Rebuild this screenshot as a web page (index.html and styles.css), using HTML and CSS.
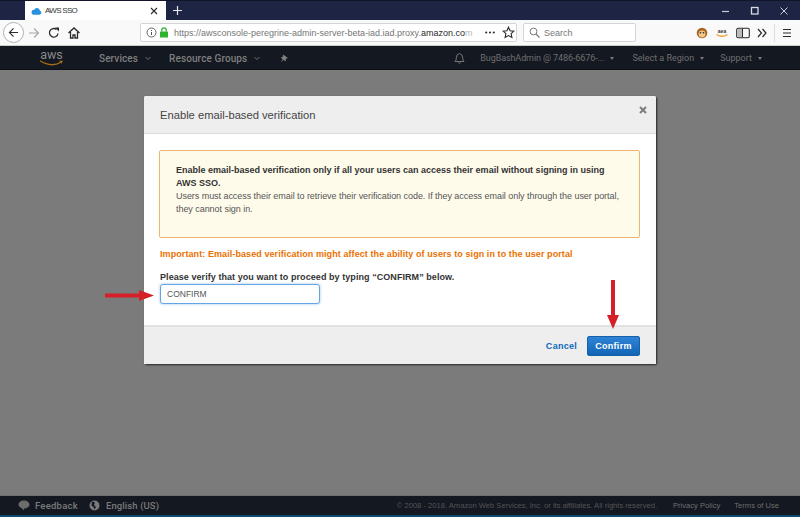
FILE: index.html
```html
<!DOCTYPE html>
<html lang="en">
<head>
<meta charset="utf-8">
<title>AWS SSO</title>
<link rel="stylesheet" href="styles.css">
</head>
<body>
<div class="window">
  <div class="tabbar">
    <div class="tab">
      <svg class="tab-icon" width="11" height="8" viewBox="0 0 16 12"><path d="M4 11.500h8.500a3 3 0 0 0 .6-5.900A4.500 4.500 0 0 0 4.600 4 3.700 3.700 0 0 0 4 11.500z" fill="#2b8fe0"/></svg>
      <span class="tab-title">AWS SSO</span>
      <svg class="tab-close" width="8" height="8" viewBox="0 0 8 8"><path d="M1 1l6 6M7 1L1 7" stroke="#2a2a2a" stroke-width="1.100"/></svg>
    </div>
    <svg class="new-tab" width="9" height="9" viewBox="0 0 9 9"><path d="M4.500 0v9M0 4.500h9" stroke="#e8e9ef" stroke-width="1.200"/></svg>
    <div class="win-buttons">
      <svg width="10" height="10" viewBox="0 0 10 10"><path d="M1 5.500h7" stroke="#c9cbd6" stroke-width="1.200"/></svg>
      <svg width="10" height="10" viewBox="0 0 10 10"><rect x="1.500" y="1.500" width="6.500" height="6.500" fill="none" stroke="#d8dae2" stroke-width="1.300"/></svg>
      <svg width="10" height="10" viewBox="0 0 10 10"><path d="M1.500 1.500l7 7M8.500 1.500l-7 7" stroke="#c9cbd6" stroke-width="1"/></svg>
    </div>
  </div>

  <div class="toolbar">
    <div class="back">
      <svg width="11" height="11" viewBox="0 0 12 12"><path d="M11 6H1.500M6 1.500L1.500 6 6 10.500" fill="none" stroke="#2a2a2a" stroke-width="1.200"/></svg>
    </div>
    <svg class="tool-forward" width="12" height="12" viewBox="0 0 12 12"><path d="M1 6h9.500M6 1.500L10.500 6 6 10.500" fill="none" stroke="#a5a5a5" stroke-width="1.100"/></svg>
    <svg class="tool-reload" width="12" height="12" viewBox="0 0 12 12"><path d="M10 6.500A4.300 4.300 0 1 1 8.500 2.500" fill="none" stroke="#2a2a2a" stroke-width="1.300"/><path d="M7 0.500h4v4z" fill="#2a2a2a"/></svg>
    <svg class="tool-home" width="12" height="12" viewBox="0 0 12 12"><path d="M0.500 6L6 1l5.500 5M2.500 5v6h2.500V8h2v3h2.500V5" fill="none" stroke="#2a2a2a" stroke-width="1.300"/></svg>
    <div class="urlbar">
      <svg class="info" width="11" height="11" viewBox="0 0 11 11"><circle cx="5.500" cy="5.500" r="4.500" fill="none" stroke="#555" stroke-width="0.900"/><path d="M5.500 5v3M5.500 3v1" stroke="#555"/></svg>
      <svg class="lock" width="10" height="11" viewBox="0 0 10 11"><rect x="1" y="4.500" width="8" height="6" rx="0.500" fill="#2fb32f"/><path d="M2.800 4.500V3a2.200 2.200 0 0 1 4.400 0v1.500" fill="none" stroke="#2fb32f" stroke-width="1.300"/></svg>
      <span class="url"><span class="url-dim">https://awsconsole-peregrine-admin-server-beta-iad.iad.proxy.</span>amazon.co<span class="url-fade">m</span></span>
      <svg class="dots" width="10" height="3" viewBox="0 0 10 3"><circle cx="1.200" cy="1.500" r="1.100" fill="#333"/><circle cx="5" cy="1.500" r="1.100" fill="#333"/><circle cx="8.800" cy="1.500" r="1.100" fill="#333"/></svg>
      <svg class="star" width="13" height="13" viewBox="0 0 13 13"><path d="M6.500 1.200l1.600 3.500 3.800.4-2.800 2.600.8 3.800-3.400-1.900-3.400 1.900.8-3.800L1.100 5.100l3.800-.4z" fill="none" stroke="#2a2a2a" stroke-width="1.100"/></svg>
    </div>
    <div class="searchbar">
      <svg width="11" height="11" viewBox="0 0 11 11"><circle cx="4.500" cy="4.500" r="3.400" fill="none" stroke="#777" stroke-width="1"/><path d="M7 7l3.500 3.500" stroke="#777" stroke-width="1.100"/></svg>
      <span>Search</span>
    </div>
    <div class="tool-right">
      <svg width="12" height="12" viewBox="0 0 12 12"><circle cx="6" cy="6" r="5.300" fill="#a8651f"/><circle cx="6" cy="7" r="3.400" fill="#f0c88a"/><circle cx="4.500" cy="5.700" r="0.800" fill="#222"/><circle cx="7.500" cy="5.700" r="0.800" fill="#222"/></svg>
      <svg width="14" height="12" viewBox="0 0 14 12"><text class="amz" x="7" y="5.500" text-anchor="middle">aea</text><path d="M1.500 7.500q5.500 3.500 11 0" fill="none" stroke="#f0a030" stroke-width="1.300"/></svg>
      <svg width="14" height="12" viewBox="0 0 14 12"><rect x="0.700" y="1.200" width="12.600" height="9.600" rx="1.500" fill="none" stroke="#2a2a2a" stroke-width="1.100"/><rect x="1.500" y="2" width="4.500" height="8" fill="#bbb"/><path d="M6.500 1.500v9" stroke="#2a2a2a"/></svg>
      <svg width="10" height="10" viewBox="0 0 10 10"><path d="M1 1l3.500 4L1 9M5.500 1L9 5 5.500 9" fill="none" stroke="#2a2a2a" stroke-width="1.200"/></svg>
      <span class="sep"></span>
      <svg width="10" height="10" viewBox="0 0 10 10"><path d="M1 1.500h8M1 5h8M1 8.500h8" stroke="#2a2a2a" stroke-width="1.200"/></svg>
    </div>
  </div>

  <header class="topnav">
    <div class="aws-logo">
      <span class="aws-text">aws</span>
      <svg width="26" height="6" viewBox="0 0 26 6"><path d="M1 0.800q11 7 21 1.500" fill="none" stroke="#a86a18" stroke-width="1.300"/><path d="M20 0.800h4l-1.500 3z" fill="#a86a18"/></svg>
    </div>
    <a class="nav-item services">Services<svg class="chev" width="6" height="5" viewBox="0 0 7 5"><path d="M0.700 0.800L3.500 3.700 6.300 0.800" fill="none" stroke="#7f7f7f" stroke-width="1"/></svg></a>
    <a class="nav-item groups">Resource Groups<svg class="chev" width="6" height="5" viewBox="0 0 7 5"><path d="M0.700 0.800L3.500 3.700 6.300 0.800" fill="none" stroke="#7f7f7f" stroke-width="1"/></svg></a>
    <svg class="pin" width="9" height="9" viewBox="0 0 9 9"><path d="M3 0.500l5 3.500-2 .8-.3 2.700L3.500 5.800 1 8.500l1.500-3.500L0.800 3.200 2.800 2.800z" fill="#7f7f7f"/></svg>
    <svg class="bell" width="11" height="12" viewBox="0 0 11 12"><path d="M1 9.500q1.300-1 1.300-3.500 0-4 3.200-4.500 3.200.5 3.200 4.500 0 2.500 1.300 3.500zM4.300 10.500a1.300 1.300 0 0 0 2.400 0" fill="none" stroke="#7f7f7f" stroke-width="0.900"/></svg>
    <a class="nav-small user">BugBashAdmin @ 7486-6676-...<i class="caret"></i></a>
    <a class="nav-small region">Select a Region<i class="caret"></i></a>
    <a class="nav-small support">Support<i class="caret"></i></a>
  </header>

  <main class="page">
    <section class="modal">
      <div class="modal-head">
        <h1>Enable email-based verification</h1>
        <svg class="modal-close" width="8" height="8" viewBox="0 0 8 8"><path d="M1 1l6 6M7 1L1 7" stroke="#7d7d7d" stroke-width="2"/></svg>
      </div>
      <div class="modal-body">
        <div class="alert">
          <p class="alert-strong">Enable email-based verification only if all your users can access their email without signing in using AWS SSO.</p>
          <p class="alert-text">Users must access their email to retrieve their verification code. If they access email only through the user portal, they cannot sign in.</p>
        </div>
        <p class="important">Important: Email-based verification might affect the ability of users to sign in to the user portal</p>
        <label class="verify-label" for="confirm-input">Please verify that you want to proceed by typing “CONFIRM” below.</label>
        <input class="verify-input" id="confirm-input" type="text" value="CONFIRM">
      </div>
      <div class="modal-foot">
        <a class="cancel">Cancel</a>
        <button class="confirm" type="button">Confirm</button>
      </div>
    </section>
    <svg class="arrow arrow-input" width="49" height="11" viewBox="0 0 49 11"><path d="M0 3.500h34V0l15 5.500-15 5.500V7.500H0z" fill="#d5202a"/></svg>
    <svg class="arrow arrow-button" width="12" height="49" viewBox="0 0 12 49"><path d="M4 0h4v35h4L6 49 0 35h4z" fill="#d5202a"/></svg>
  </main>

  <footer class="footer">
    <svg class="foot-icon" width="12" height="11" viewBox="0 0 12 11"><path d="M6 0.500c3 0 5.500 1.800 5.500 4s-2.500 4-5.500 4l-.5 2L3.500 8C1.800 7.400.500 6.100.500 4.500c0-2.200 2.500-4 5.500-4z" fill="#6c6c6c"/></svg>
    <a class="foot-strong feedback">Feedback</a>
    <svg class="foot-icon globe" width="11" height="11" viewBox="0 0 11 11"><circle cx="5.500" cy="5.500" r="5" fill="#7a7a7a"/><path d="M3 1.500l3 1-1 2.500 2 2-1.500 2.500-1-2.500-2-1.500z" fill="#151a21"/></svg>
    <a class="foot-strong lang">English (US)</a>
    <span class="copyright">© 2008 - 2018, Amazon Web Services, Inc. or its affiliates. All rights reserved.</span>
    <a class="foot-link">Privacy Policy</a>
    <a class="foot-link">Terms of Use</a>
  </footer>
</div>
</body>
</html>
```

FILE: styles.css
```css
* { box-sizing: border-box; }
html, body { margin: 0; padding: 0; height: 100%; overflow: hidden; }
body { font-family: "Liberation Sans", Arial, sans-serif; background: #1c2340; }
a { text-decoration: none; }
p { margin: 0; }

.window { width: 800px; height: 517px; display: flex; flex-direction: column; }

/* browser chrome */
.tabbar { height: 20px; flex: none; display: flex; align-items: center; background: #1e2444; border-top: 1px solid #12152a; }
.tab { width: 141px; height: 19px; margin-left: 25px; background: #fff; display: flex; align-items: center; padding: 0 8px 0 6px; }
.tab-title { font-size: 8px; letter-spacing: -.7px; color: #333; margin-left: 3px; flex: 1; }
.new-tab { margin-left: 7px; }
.win-buttons { margin-left: auto; display: flex; gap: 19px; padding-right: 11px; }

.toolbar { height: 26px; flex: none; background: #f9f9fa; display: flex; align-items: center; border-bottom: 1px solid #ccc; padding: 0 0 0 3px; }
.back { width: 21px; height: 21px; border-radius: 50%; border: 1px solid #b1b1b3; background: #fff; display: flex; align-items: center; justify-content: center; }
.tool-forward { margin-left: 4px; }
.tool-reload { margin-left: 8px; }
.tool-home { margin-left: 8px; }
.urlbar { width: 377px; height: 19px; margin-left: 60px; border: 1px solid #d5d5d6; border-radius: 2px; background: #fff; display: flex; align-items: center; padding: 0 1px 0 5px; }
.lock { margin-left: 2px; }
.url { font-size: 9px; white-space: nowrap; margin-left: 5px; color: #2b2b2b; flex: none; }
.url-dim { color: #767676; }
.url-fade { color: #b5b5b5; }
.dots { margin-left: auto; }
.star { margin-left: 7px; }
.searchbar { width: 113px; height: 19px; margin-left: 6px; border: 1px solid #d5d5d6; border-radius: 2px; background: #fff; display: flex; align-items: center; gap: 4px; padding-left: 5px; font-size: 9px; color: #777; }
.tool-right { margin-left: auto; display: flex; align-items: center; gap: 7px; padding-right: 8px; }
.sep { width: 1px; height: 18px; background: #ddd; }
.amz { font-size: 5px; font-weight: 700; fill: #333; font-family: "Liberation Sans", sans-serif; }

/* AWS nav (dimmed) */
.topnav { height: 24px; flex: none; background: #131821; display: flex; align-items: center; font-family: Roboto, "Liberation Sans", sans-serif; border-bottom: 1px solid #0c0f15; padding-top: 1px; }
.aws-logo { margin-left: 38px; width: 27px; display: flex; flex-direction: column; align-items: center; line-height: 1; height: 20px; margin-top: -1px; }
.aws-text { font-size: 12.500px; color: #8a8a8a; line-height: 13px; }
.aws-logo svg { margin-top: -1px; }
.nav-item { font-size: 10px; font-weight: 500; color: #7f7f7f; display: flex; align-items: center; letter-spacing: .01em; }
.nav-item .chev { margin-left: 7px; }
.services { margin-left: 34px; }
.groups { margin-left: 18px; }
.pin { margin-left: 20px; }
.bell { margin-left: 165px; }
.nav-small { font-size: 9px; color: #6f6f6f; display: flex; align-items: center; white-space: nowrap; }
.caret { display: inline-block; width: 0; height: 0; border: 2.500px solid transparent; border-top: 3px solid #7a7a7a; border-bottom: 0; margin-left: 6px; }
.user { margin-left: 15px; letter-spacing: -.1px; }
.region { margin-left: 18px; }
.support { margin-left: 16px; }

/* page */
.page { height: 426px; flex: none; background: #7b7b7b; position: relative; padding: 26px 0 0 144px; border-bottom: 1px solid #6f6f6f; }
.modal { width: 512px; height: 268px; background: #fff; border-radius: 2px; box-shadow: 1px 1px 2px rgba(0,0,0,.7); display: flex; flex-direction: column; }
.modal-head { height: 38px; flex: none; background: #eee; border-bottom: 1px solid #ddd; border-radius: 2px 2px 0 0; position: relative; display: flex; align-items: center; padding-left: 16px; }
.modal-head h1 { margin: 0; font-size: 11.200px; font-weight: 400; color: #444; }
.modal-close { position: absolute; right: 9px; top: 10px; }
.modal-body { flex: 1; padding: 16px 16px 0 15px; }
.alert { width: 481px; height: 88px; background: #fffbeb; border: 1px solid #f0b56c; border-radius: 2px; padding: 13px 12px 0 16px; font-size: 9px; line-height: 13px; color: #555; }
.alert-strong { font-weight: 700; color: #333; }
.alert-text { letter-spacing: -.05px; }
.important { margin: 11px 0 0 1px; font-size: 9px; line-height: 11px; font-weight: 700; color: #eb7000; letter-spacing: .009em; }
.verify-label { display: block; margin: 12px 0 0 1px; font-size: 9px; line-height: 11px; font-weight: 700; color: #333; letter-spacing: .007em; }
.verify-input { display: block; width: 160px; height: 20px; margin: 1px 0 0 1px; padding: 0 6px; border: 1px solid #64a4e4; border-radius: 3px; box-shadow: 0 0 3px rgba(0,115,187,.4); font: 8.500px "Liberation Sans", sans-serif; color: #555; background: #fff; outline: none; }
.modal-foot { height: 39px; flex: none; background: #eee; border-top: 2px solid #e2e2e2; display: flex; align-items: center; justify-content: flex-end; padding: 0 16px 0 0; }
.cancel { font-size: 9px; font-weight: 700; color: #0d68b8; letter-spacing: .03em; margin-right: 10px; }
.confirm { width: 53px; height: 20px; border: 1px solid #1561a8; border-radius: 2px; background: linear-gradient(#2f83d6, #1265b5); color: #fff; font: 700 9px "Liberation Sans", sans-serif; letter-spacing: .03em; padding: 0; }
.arrow { position: absolute; }
.arrow-input { left: 105px; top: 220px; }
.arrow-button { left: 607px; top: 210px; }

/* footer */
.footer { flex: 1; background: #131821; display: flex; align-items: center; border-bottom: 2px solid #0c4a70; font-family: Roboto, "Liberation Sans", sans-serif; padding-bottom: 1px; }
.foot-icon { margin-left: 18px; }
.globe { margin-left: 11px; }
.foot-strong { font-size: 9.500px; font-weight: 500; color: #7a7a7a; margin-left: 6px; letter-spacing: .025em; }
.feedback { margin-left: 5px; }
.lang { letter-spacing: .01em; }
.copyright { margin-left: auto; font-size: 7.600px; color: #555; font-family: "Liberation Sans", sans-serif; }
.foot-link { font-size: 7.600px; color: #6f6f6f; font-family: "Liberation Sans", sans-serif; margin-left: 16px; }
.foot-link:last-child { margin-right: 21px; margin-left: 14px; }
```
